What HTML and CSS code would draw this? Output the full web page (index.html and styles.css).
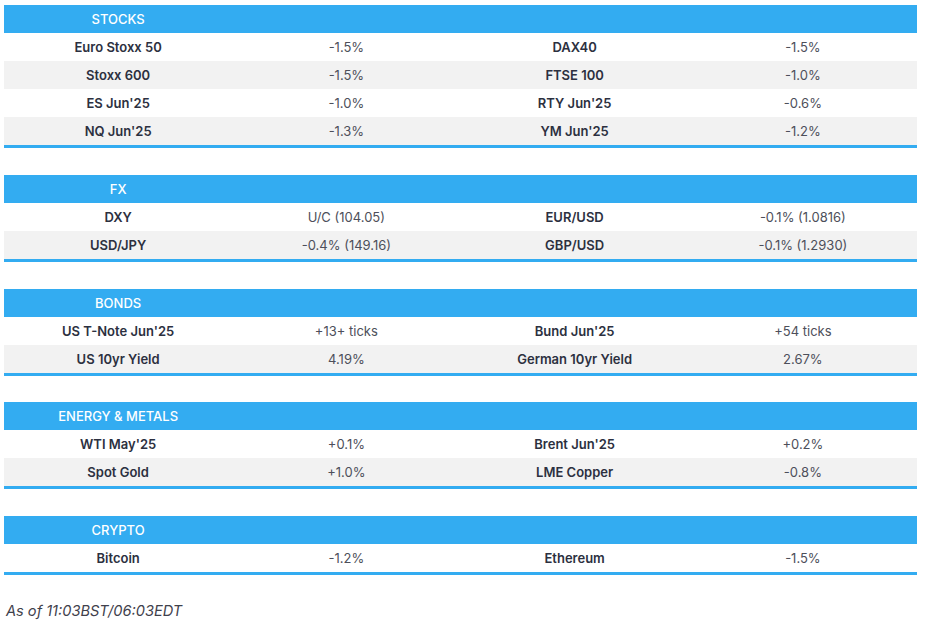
FILE: index.html
```html
<!DOCTYPE html>
<html>
<head>
<meta charset="utf-8">
<link rel="stylesheet" href="styles.css">
</head>
<body>
<div class="page">
  <table class="mkt">
    <thead><tr><th>STOCKS</th><th></th><th></th><th></th></tr></thead>
    <tbody>
      <tr><td class="lbl">Euro Stoxx 50</td><td class="val">-1.5%</td><td class="lbl">DAX40</td><td class="val">-1.5%</td></tr>
      <tr><td class="lbl">Stoxx 600</td><td class="val">-1.5%</td><td class="lbl">FTSE 100</td><td class="val">-1.0%</td></tr>
      <tr><td class="lbl">ES Jun'25</td><td class="val">-1.0%</td><td class="lbl">RTY Jun'25</td><td class="val">-0.6%</td></tr>
      <tr><td class="lbl">NQ Jun'25</td><td class="val">-1.3%</td><td class="lbl">YM Jun'25</td><td class="val">-1.2%</td></tr>
    </tbody>
  </table>
  <table class="mkt">
    <thead><tr><th>FX</th><th></th><th></th><th></th></tr></thead>
    <tbody>
      <tr><td class="lbl">DXY</td><td class="val">U/C (104.05)</td><td class="lbl">EUR/USD</td><td class="val">-0.1% (1.0816)</td></tr>
      <tr><td class="lbl">USD/JPY</td><td class="val">-0.4% (149.16)</td><td class="lbl">GBP/USD</td><td class="val">-0.1% (1.2930)</td></tr>
    </tbody>
  </table>
  <table class="mkt">
    <thead><tr><th>BONDS</th><th></th><th></th><th></th></tr></thead>
    <tbody>
      <tr><td class="lbl">US T-Note Jun'25</td><td class="val">+13+ ticks</td><td class="lbl">Bund Jun'25</td><td class="val">+54 ticks</td></tr>
      <tr><td class="lbl">US 10yr Yield</td><td class="val">4.19%</td><td class="lbl">German 10yr Yield</td><td class="val">2.67%</td></tr>
    </tbody>
  </table>
  <table class="mkt">
    <thead><tr><th>ENERGY &amp; METALS</th><th></th><th></th><th></th></tr></thead>
    <tbody>
      <tr><td class="lbl">WTI May'25</td><td class="val">+0.1%</td><td class="lbl">Brent Jun'25</td><td class="val">+0.2%</td></tr>
      <tr><td class="lbl">Spot Gold</td><td class="val">+1.0%</td><td class="lbl">LME Copper</td><td class="val">-0.8%</td></tr>
    </tbody>
  </table>
  <table class="mkt">
    <thead><tr><th>CRYPTO</th><th></th><th></th><th></th></tr></thead>
    <tbody>
      <tr><td class="lbl">Bitcoin</td><td class="val">-1.2%</td><td class="lbl">Ethereum</td><td class="val">-1.5%</td></tr>
    </tbody>
  </table>
  <p class="note">As of 11:03BST/06:03EDT</p>
</div>
</body>
</html>
```
FILE: styles.css
```css
html, body {
  margin: 0;
  padding: 0;
  background: #ffffff;
}
body {
  font-family: Inter, "Noto Sans", "Liberation Sans", sans-serif;
  font-size: 13px;
}
.page {
  padding: 5px 16px 0 4px;
}
.mkt {
  width: 913px;
  table-layout: fixed;
  border-collapse: collapse;
  margin-bottom: 26.75px;
  border-bottom: 3px solid #33acf1;
}
.mkt th {
  background: #33acf1;
  color: #ffffff;
  font-weight: 500;
  height: 28px;
  padding: 0;
  text-align: center;
  vertical-align: middle;
  white-space: nowrap;
}
.mkt td {
  height: 28px;
  padding: 0;
  text-align: center;
  vertical-align: middle;
  white-space: nowrap;
}
.mkt tbody tr:nth-child(even) td {
  background: #f2f2f2;
}
.lbl {
  color: #2c3040;
  font-weight: 600;
}
.val {
  color: #4d4f5a;
  font-weight: 400;
}
.note {
  margin: 0;
  padding: 0 0 0 2px;
  color: #3f414c;
  font-size: 14.6px;
  font-style: italic;
  line-height: 18px;
  position: relative;
  top: 0;
}
```
